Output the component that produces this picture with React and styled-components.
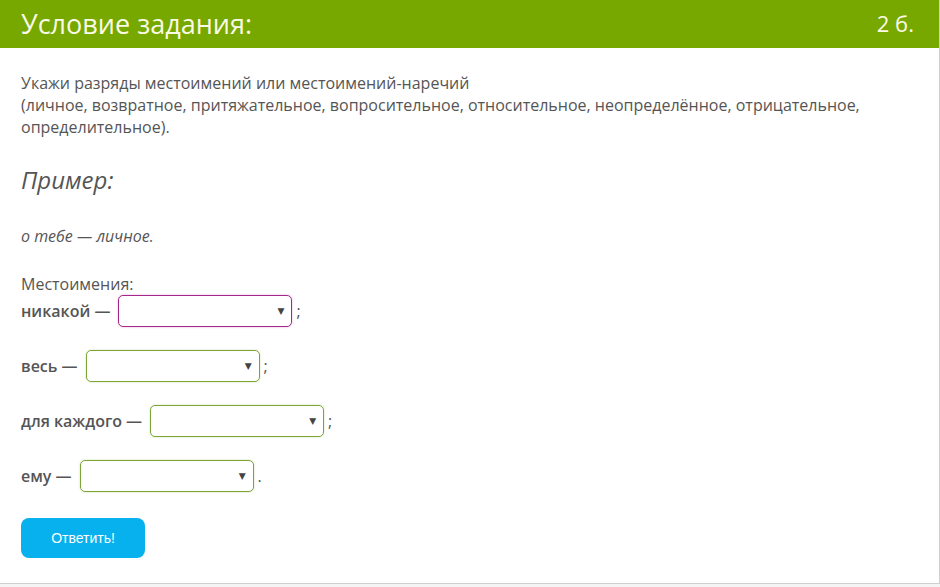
import styled, { createGlobalStyle } from "styled-components";

const GlobalStyle = createGlobalStyle`
  html, body {
    margin: 0;
    padding: 0;
    background: #f4f4f4;
  }
  body {
    font-family: "Open Sans", "Liberation Sans", sans-serif;
  }
`;

const rows = [
  { word: "никакой", end: ";", active: true },
  { word: "весь", end: ";" },
  { word: "для каждого", end: ";" },
  { word: "ему", end: "." },
];

function App() {
  return (
    <>
      <GlobalStyle />
      <Card>
        <Header>
          <Title>Условие задания:</Title>
          <Points>2 б.</Points>
        </Header>
        <Body>
          <Text>
            Укажи разряды местоимений или местоимений-наречий
            <br />
            (личное, возвратное, притяжательное, вопросительное, относительное, неопределённое, отрицательное,
            определительное).
          </Text>
          <ExampleTitle>Пример:</ExampleTitle>
          <ExampleText>о тебе — личное.</ExampleText>
          <Label>Местоимения:</Label>
          {rows.map((r, i) => (
            <Row key={r.word} $first={i === 0}>
              <Word>{r.word} —</Word>
              <Select $active={r.active}>
                <Arrow>▼</Arrow>
              </Select>
              <End>{r.end}</End>
            </Row>
          ))}
          <SubmitBtn>Ответить!</SubmitBtn>
        </Body>
      </Card>
    </>
  );
}

const Card = styled.div`
  width: 939px;
  height: 583px;
  background: #fff;
  border-right: 1px solid #cfcfcf;
  border-bottom: 1px solid #cfcfcf;
  display: flex;
  flex-direction: column;
`;

const Header = styled.div`
  height: 48px;
  background-color: #76a800;
  display: flex;
  align-items: center;
  justify-content: space-between;
  padding: 0 25px 0 21px;
  color: #fafae6;
`;

const Title = styled.h1`
  margin: 0;
  font-size: 27px;
  font-weight: 400;
  margin-top: -2px;
`;

const Points = styled.span`
  font-size: 22px;
  margin-top: -2px;
`;

const Body = styled.div`
  padding: 24px 21px 0;
  color: #555;
`;

const Text = styled.p`
  margin: 0;
  font-size: 16px;
  line-height: 22px;
`;

const ExampleTitle = styled.h2`
  margin: 26px 0 0;
  font-size: 24px;
  font-style: italic;
  font-weight: 400;
  line-height: 32px;
`;

const ExampleText = styled.p`
  margin: 30px 0 0;
  font-size: 16px;
  font-style: italic;
  line-height: 20px;
`;

const Label = styled.div`
  margin-top: 28px;
  font-size: 16px;
  line-height: 20px;
`;

const Row = styled.div`
  display: flex;
  align-items: center;
  margin-top: ${(p) => (p.$first ? "1px" : "23px")};
  height: 32px;
  font-size: 16px;
`;

const Word = styled.span`
  font-weight: 600;
  margin-right: 8px;
`;

const Select = styled.div`
  box-sizing: border-box;
  width: 174px;
  height: 32px;
  border: 1px solid ${(p) => (p.$active ? "#a3288a" : "#7ba536")};
  border-radius: 5px;
  box-shadow: 0 0 2px ${(p) => (p.$active ? "rgba(200, 60, 170, 0.45)" : "rgba(140, 180, 60, 0.45)")};
  display: flex;
  align-items: center;
  justify-content: flex-end;
  padding-right: 7px;
`;

const Arrow = styled.span`
  font-size: 9px;
  color: #444;
  font-family: "DejaVu Sans", sans-serif;
`;

const End = styled.span`
  margin-left: 4px;
`;

const SubmitBtn = styled.button`
  margin-top: 26px;
  width: 124px;
  height: 40px;
  border: 0;
  border-radius: 8px;
  background-color: #07b1ee;
  color: #fff;
  font-family: "Liberation Sans", Arial, sans-serif;
  font-size: 14px;
`;

export default App;
